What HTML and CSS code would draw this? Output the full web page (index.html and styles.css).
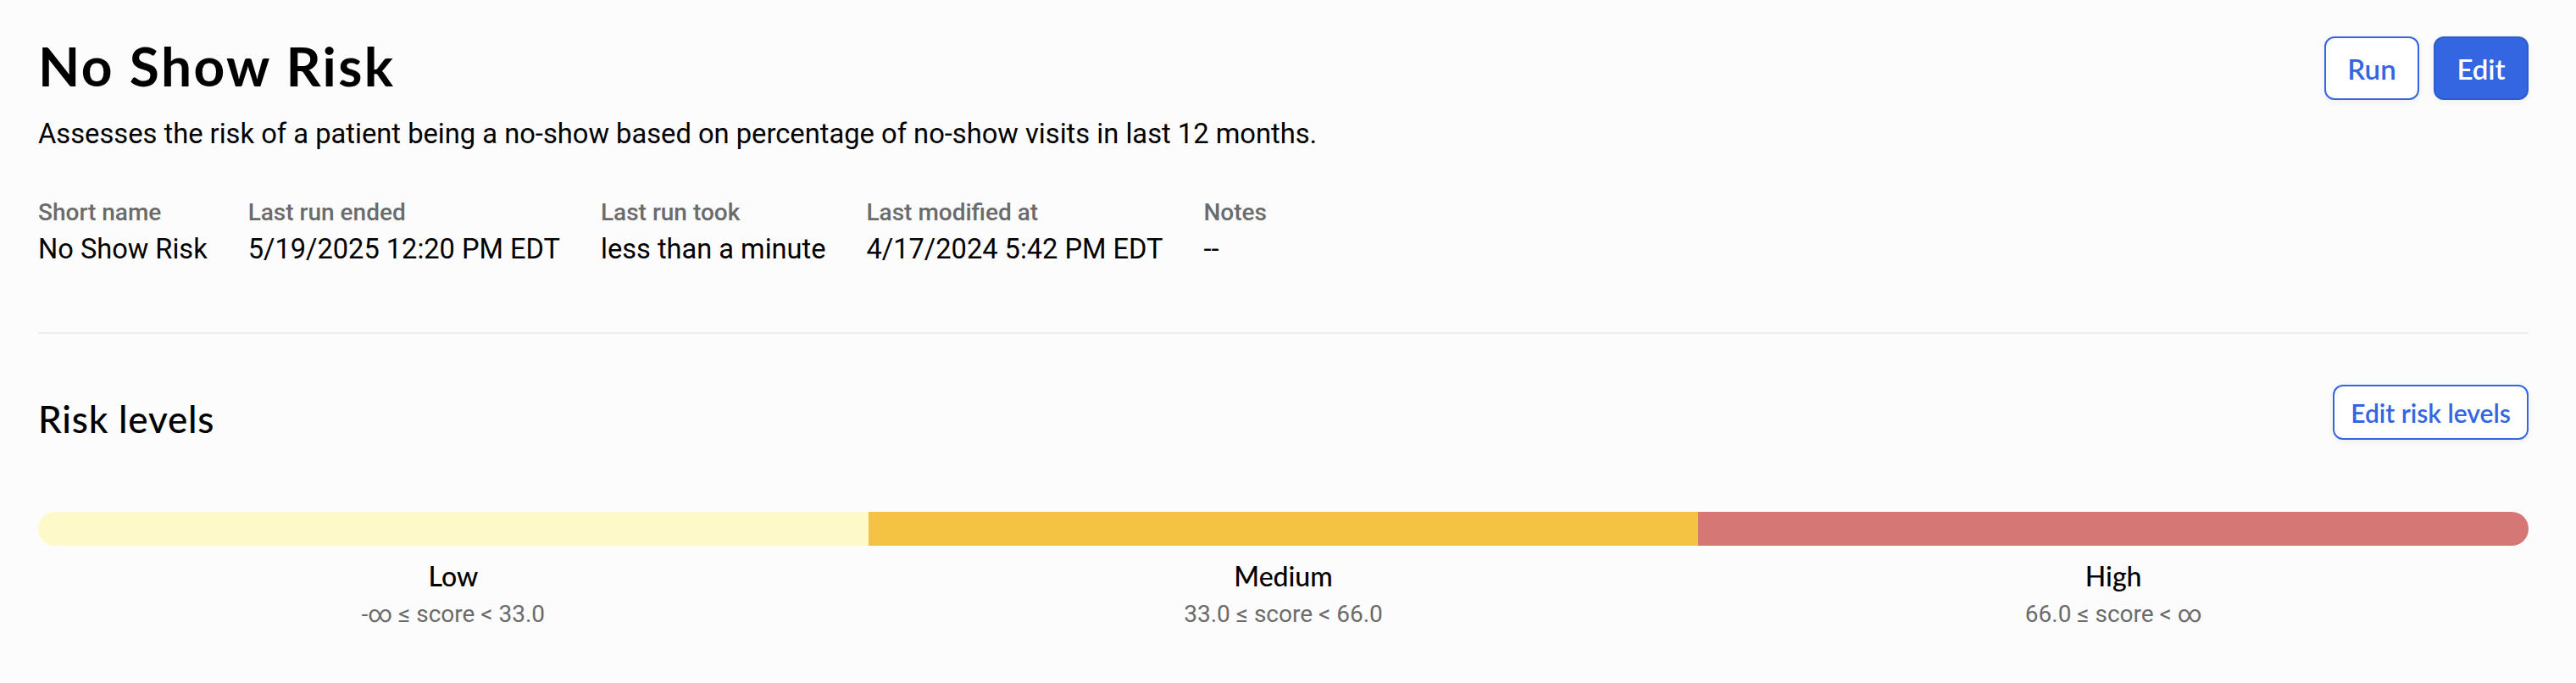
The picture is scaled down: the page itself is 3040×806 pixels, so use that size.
FILE: index.html
```html
<!DOCTYPE html>
<html lang="en">
<head>
<meta charset="utf-8">
<title>No Show Risk</title>
<link rel="stylesheet" href="styles.css">
</head>
<body>
<main class="page">
  <header class="head">
    <div class="head-text">
      <h1 class="title">No Show Risk</h1>
      <p class="desc">Assesses the risk of a patient being a no-show based on percentage of no-show visits in last 12 months.</p>
    </div>
    <div class="actions">
      <button class="btn btn-outline btn-lg">Run</button>
      <button class="btn btn-primary btn-lg">Edit</button>
    </div>
  </header>

  <dl class="meta">
    <div class="meta-item"><dt>Short name</dt><dd>No Show Risk</dd></div>
    <div class="meta-item"><dt>Last run ended</dt><dd>5/19/2025 12:20 PM EDT</dd></div>
    <div class="meta-item"><dt>Last run took</dt><dd>less than a minute</dd></div>
    <div class="meta-item"><dt>Last modified at</dt><dd>4/17/2024 5:42 PM EDT</dd></div>
    <div class="meta-item"><dt>Notes</dt><dd>--</dd></div>
  </dl>

  <hr class="divider">

  <section class="risk">
    <div class="risk-head">
      <h2 class="risk-title">Risk levels</h2>
      <button class="btn btn-outline btn-sm">Edit risk levels</button>
    </div>
    <div class="bar">
      <div class="seg seg-low"></div>
      <div class="seg seg-med"></div>
      <div class="seg seg-high"></div>
    </div>
    <div class="legend">
      <div class="legend-item"><div class="legend-name">Low</div><div class="legend-range">-∞ ≤ score &lt; 33.0</div></div>
      <div class="legend-item"><div class="legend-name">Medium</div><div class="legend-range">33.0 ≤ score &lt; 66.0</div></div>
      <div class="legend-item"><div class="legend-name">High</div><div class="legend-range">66.0 ≤ score &lt; ∞</div></div>
    </div>
  </section>
</main>
</body>
</html>
```

FILE: styles.css
```css
html, body {
  margin: 0;
  padding: 0;
  background: #fcfcfc;
}

body {
  font-family: Roboto, "Liberation Sans", sans-serif;
  color: #000;
}

.page {
  padding: 40px 56px 40px 45px;
}

.head {
  display: flex;
  justify-content: space-between;
  align-items: flex-start;
}

.title {
  margin: 0;
  font-family: Lato, "Noto Sans", sans-serif;
  font-weight: 700;
  font-size: 64px;
  letter-spacing: 2.4px;
  line-height: 76px;
  color: #000;
}

.desc {
  margin: 18px 0 0;
  font-size: 32.7px;
  line-height: 48px;
}

.actions {
  display: flex;
  gap: 17px;
  margin-top: 3px;
}

.btn {
  font-family: Lato, "Noto Sans", sans-serif;
  font-weight: 600;
  box-sizing: border-box;
  border: 2px solid #3366e0;
  cursor: pointer;
  display: inline-flex;
  align-items: center;
  justify-content: center;
  box-shadow: 0 2px 8px rgba(0, 0, 0, 0.06);
}

.btn-lg {
  height: 75px;
  min-width: 112px;
  padding: 0 24px;
  border-radius: 12px;
  font-size: 33px;
}

.btn-outline {
  background: #fff;
  color: #3366e0;
}

.btn-primary {
  background: #3366e0;
  border-color: #2e5ccf;
  color: #fff;
}

.btn-sm {
  height: 65px;
  min-width: 231px;
  padding: 0 18px;
  border-radius: 12px;
  font-size: 30px;
}

.meta {
  display: flex;
  gap: 48px;
  margin: 49px 0 0;
}

.meta-item dt {
  font-weight: 500;
  font-size: 28px;
  line-height: 40px;
  color: #6b6b6b;
}

.meta-item dd {
  margin: 1px 0 0;
  font-size: 32.6px;
  line-height: 44px;
}

.divider {
  margin: 76px 0 0;
  border: 0;
  height: 2px;
  background: #ededed;
}

.risk-head {
  display: flex;
  justify-content: space-between;
  align-items: flex-start;
  margin-top: 60px;
}

.risk-title {
  margin: 14px 0 0;
  font-family: Lato, "Noto Sans", sans-serif;
  font-weight: 500;
  font-size: 44px;
  letter-spacing: 0.8px;
  line-height: 52px;
}

.bar {
  display: flex;
  height: 40px;
  margin-top: 84px;
  border-radius: 20px;
  overflow: hidden;
}

.seg {
  flex: 1;
}

.seg-low { background: #fef9c9; }
.seg-med { background: #f5c344; }
.seg-high { background: #d57875; }

.legend {
  display: flex;
}

.legend-item {
  flex: 1;
  text-align: center;
}

.legend-name {
  margin-top: 16px;
  font-family: Lato, "Noto Sans", sans-serif;
  font-weight: 500;
  font-size: 32px;
  line-height: 40px;
}

.legend-range {
  margin-top: 8px;
  font-size: 28px;
  line-height: 34px;
  color: #6b6b6b;
}
```
